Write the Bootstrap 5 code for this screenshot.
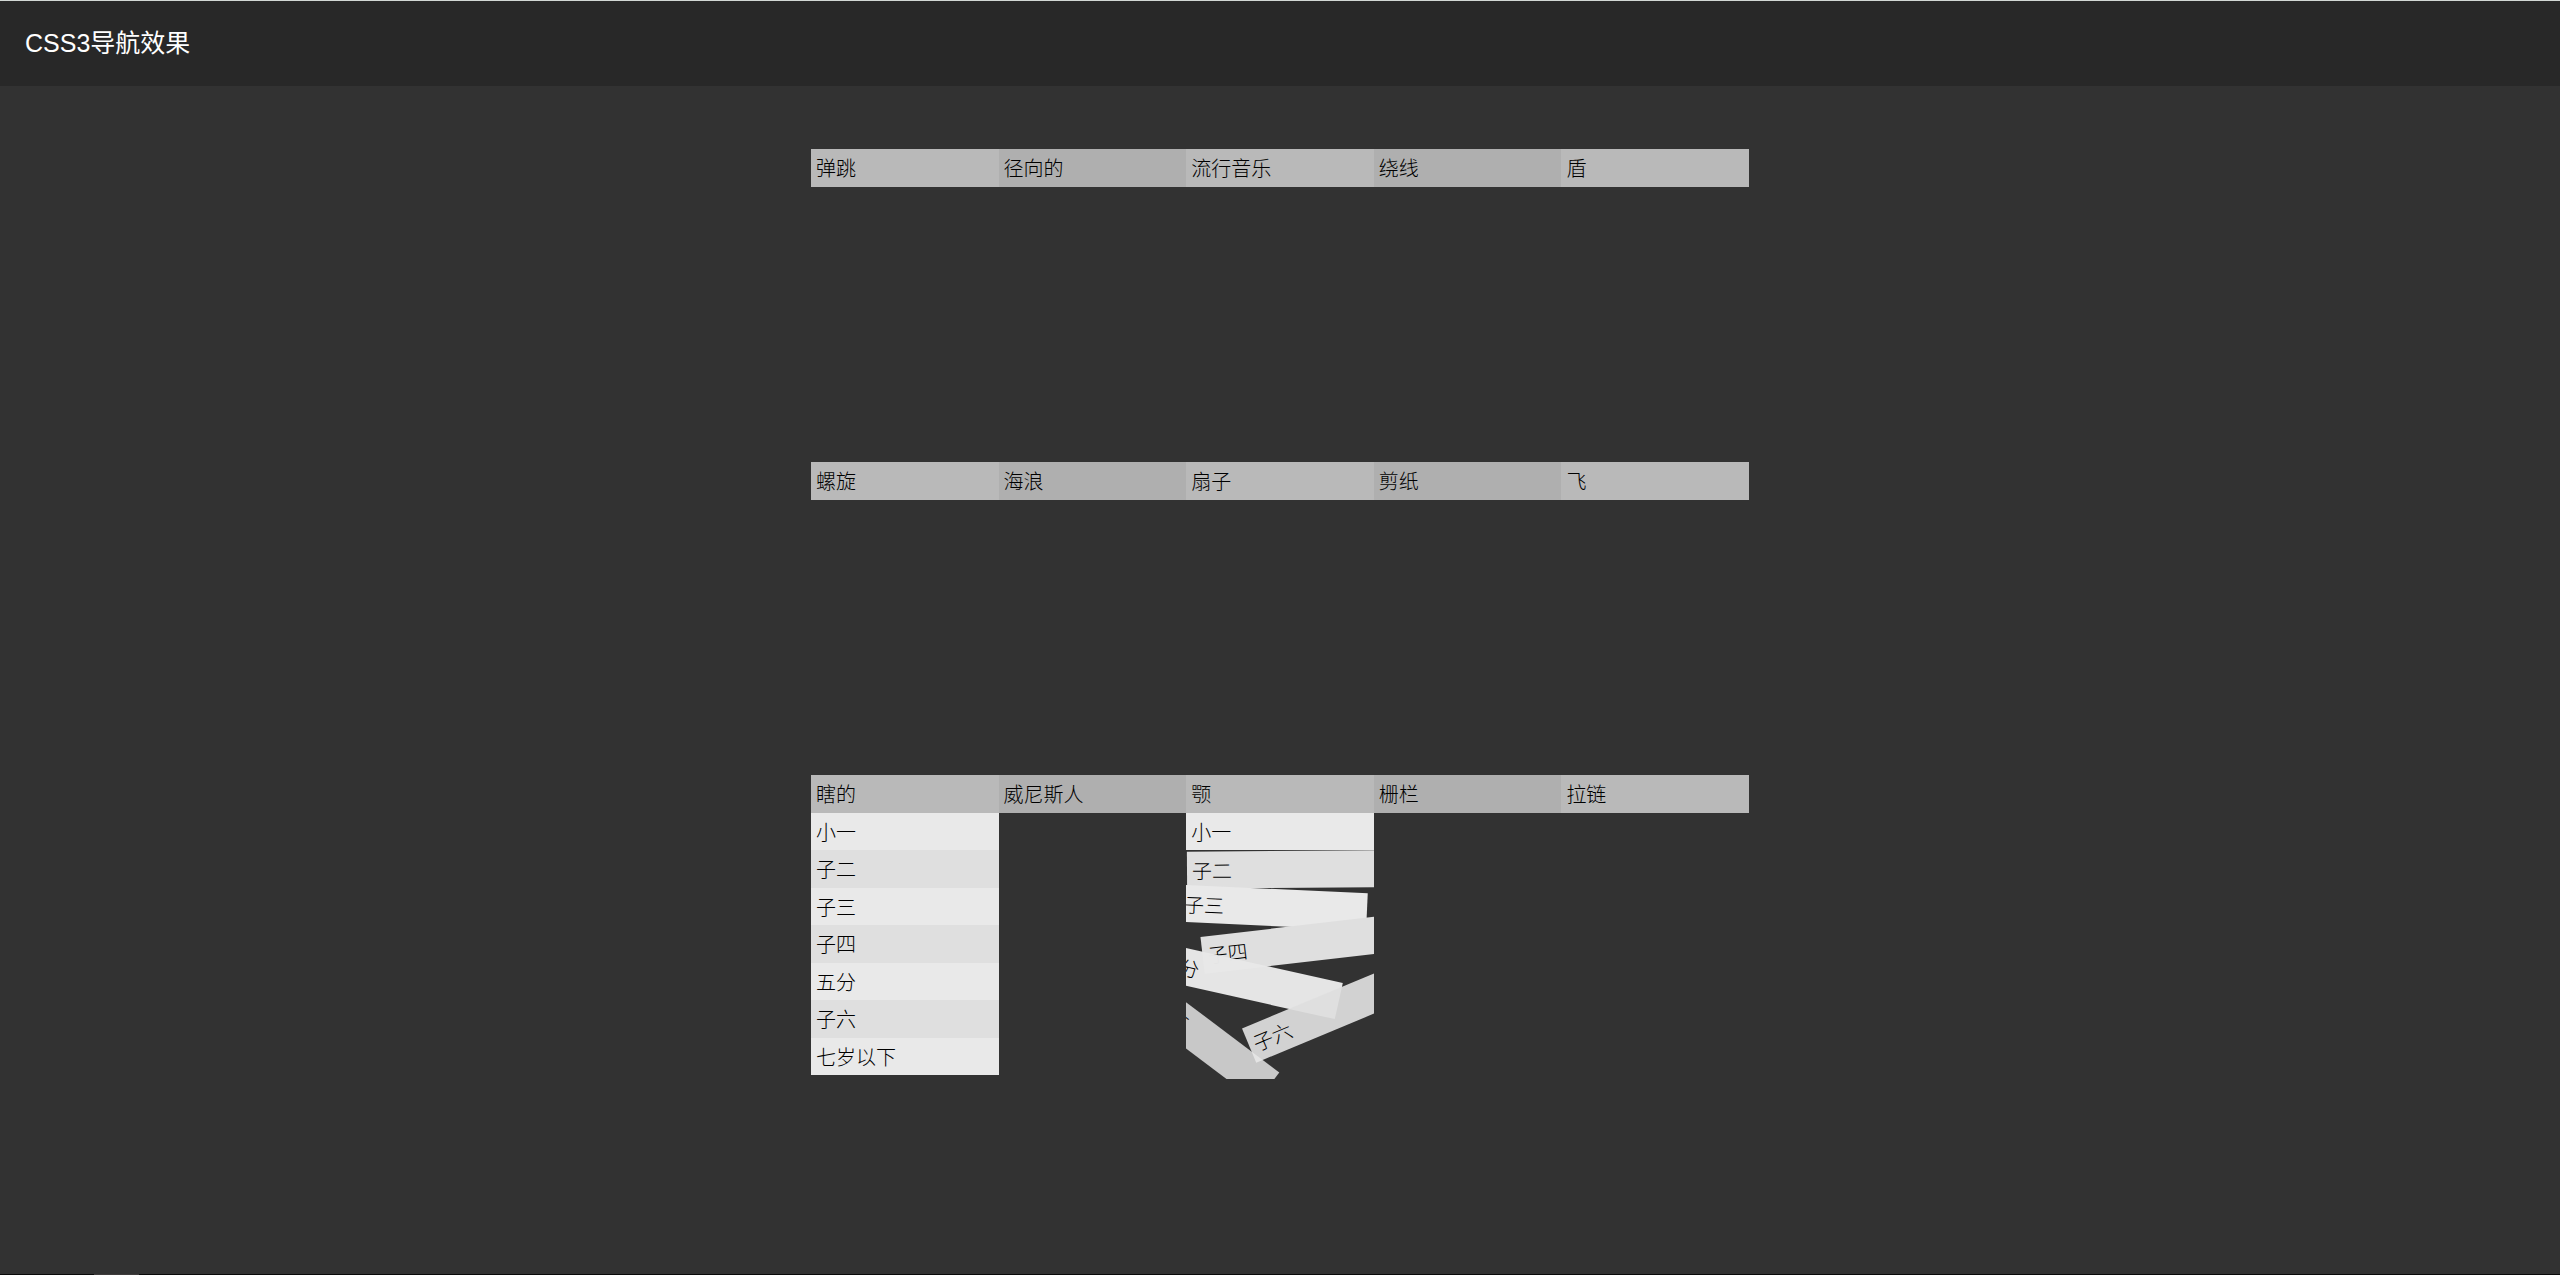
<!DOCTYPE html>
<html lang="zh-CN">
<head>
    <meta charset="UTF-8">
    <meta name="viewport" content="width=device-width, initial-scale=1.0">
    <title>CSS3导航效果</title>
    <link href="https://cdn.jsdelivr.net/npm/bootstrap@5.3.0/dist/css/bootstrap.min.css" rel="stylesheet">

    <style>
        body {
            background-color: #323232;
            font-family: "Liberation Sans", "Noto Sans CJK SC", sans-serif;
        }

        .site-header {
            background-color: #282828;
            border-top: 1px solid #d2d8d5;
            padding: 24px 25px;
        }

        .site-title {
            color: #fff;
            font-size: 25px;
            font-weight: 400;
            line-height: 37px;
        }

        .demo {
            width: 100%;
            max-width: 938px;
            padding-top: 63px;
        }

        .menu-bar {
            min-height: 313px;   /* leaves room for an open submenu */
            font-size: 20px;
            font-weight: 300;
            line-height: 41px;
        }

        .menu-bar a {
            color: #000;
            padding-left: 5px;
        }

        .menu-title {
            background-color: #b9b9b9;
            height: 38px;
        }

        .menu-bar > li:nth-child(even) > .menu-title {
            background-color: #afafaf;
        }

        .submenu {
            height: 262px;
        }

        .submenu > li {
            background-color: #e9e9e9;
        }

        .submenu > li:nth-child(even) {
            background-color: #dfdfdf;
        }

        /* Jaw: the items swing out left and right while the menu closes */
        .jaw-window {
            height: 266px;
        }

        .jaw > li:nth-child(2) { transform: translate(1px, 1px) rotate(-0.4deg); }
        .jaw > li:nth-child(3) { transform: translate(-7px, 1px) rotate(2.6deg); }
        .jaw > li:nth-child(4) { transform: translate(16px, 1px) rotate(-6.6deg); }
        .jaw > li:nth-child(5) { transform: translate(-33px, -1px) rotate(12.6deg); opacity: 0.98; }
        .jaw > li:nth-child(6) { transform: translate(56px, -9px) rotate(-22.6deg); opacity: 0.93; }
        .jaw > li:nth-child(7) { transform: translate(-87px, -26px) rotate(37deg); opacity: 0.82; }

        .bottom-line {
            background-color: #0a0a0a;
            padding-left: 94px;
        }

        .bottom-line span {
            background-color: #3f3c3c;
            width: 45px;
            height: 1px;
        }
    </style>
</head>
<body class="d-flex flex-column min-vh-100">
    <header class="site-header">
        <h1 class="site-title mb-0">CSS3导航效果</h1>
    </header>

    <main class="demo mx-auto">
        <ul class="menu-bar row row-cols-5 g-0 list-unstyled mb-0">
            <li><a class="menu-title d-block text-decoration-none" href="#">弹跳</a></li>
            <li><a class="menu-title d-block text-decoration-none" href="#">径向的</a></li>
            <li><a class="menu-title d-block text-decoration-none" href="#">流行音乐</a></li>
            <li><a class="menu-title d-block text-decoration-none" href="#">绕线</a></li>
            <li><a class="menu-title d-block text-decoration-none" href="#">盾</a></li>
        </ul>

        <ul class="menu-bar row row-cols-5 g-0 list-unstyled mb-0">
            <li><a class="menu-title d-block text-decoration-none" href="#">螺旋</a></li>
            <li><a class="menu-title d-block text-decoration-none" href="#">海浪</a></li>
            <li><a class="menu-title d-block text-decoration-none" href="#">扇子</a></li>
            <li><a class="menu-title d-block text-decoration-none" href="#">剪纸</a></li>
            <li><a class="menu-title d-block text-decoration-none" href="#">飞</a></li>
        </ul>

        <ul class="menu-bar row row-cols-5 g-0 list-unstyled mb-0">
            <li>
                <a class="menu-title d-block text-decoration-none" href="#">瞎的</a>
                <ul class="submenu d-flex flex-column list-unstyled mb-0">
                    <li class="flex-fill overflow-hidden"><a class="d-block text-decoration-none" href="#">小一</a></li>
                    <li class="flex-fill overflow-hidden"><a class="d-block text-decoration-none" href="#">子二</a></li>
                    <li class="flex-fill overflow-hidden"><a class="d-block text-decoration-none" href="#">子三</a></li>
                    <li class="flex-fill overflow-hidden"><a class="d-block text-decoration-none" href="#">子四</a></li>
                    <li class="flex-fill overflow-hidden"><a class="d-block text-decoration-none" href="#">五分</a></li>
                    <li class="flex-fill overflow-hidden"><a class="d-block text-decoration-none" href="#">子六</a></li>
                    <li class="flex-fill overflow-hidden"><a class="d-block text-decoration-none" href="#">七岁以下</a></li>
                </ul>
            </li>
            <li><a class="menu-title d-block text-decoration-none" href="#">威尼斯人</a></li>
            <li>
                <a class="menu-title d-block text-decoration-none" href="#">颚</a>
                <div class="jaw-window overflow-hidden">
                    <ul class="submenu jaw d-flex flex-column list-unstyled mb-0">
                        <li class="flex-fill overflow-hidden"><a class="d-block text-decoration-none" href="#">小一</a></li>
                        <li class="flex-fill overflow-hidden"><a class="d-block text-decoration-none" href="#">子二</a></li>
                        <li class="flex-fill overflow-hidden"><a class="d-block text-decoration-none" href="#">子三</a></li>
                        <li class="flex-fill overflow-hidden"><a class="d-block text-decoration-none" href="#">子四</a></li>
                        <li class="flex-fill overflow-hidden"><a class="d-block text-decoration-none" href="#">五分</a></li>
                        <li class="flex-fill overflow-hidden"><a class="d-block text-decoration-none" href="#">子六</a></li>
                        <li class="flex-fill overflow-hidden"><a class="d-block text-decoration-none" href="#">七岁以下</a></li>
                    </ul>
                </div>
            </li>
            <li><a class="menu-title d-block text-decoration-none" href="#">栅栏</a></li>
            <li><a class="menu-title d-block text-decoration-none" href="#">拉链</a></li>
        </ul>
    </main>

    <footer class="bottom-line d-flex mt-auto"><span></span></footer>

    <script src="https://cdn.jsdelivr.net/npm/bootstrap@5.3.0/dist/js/bootstrap.bundle.min.js"></script>
</body>
</html>
